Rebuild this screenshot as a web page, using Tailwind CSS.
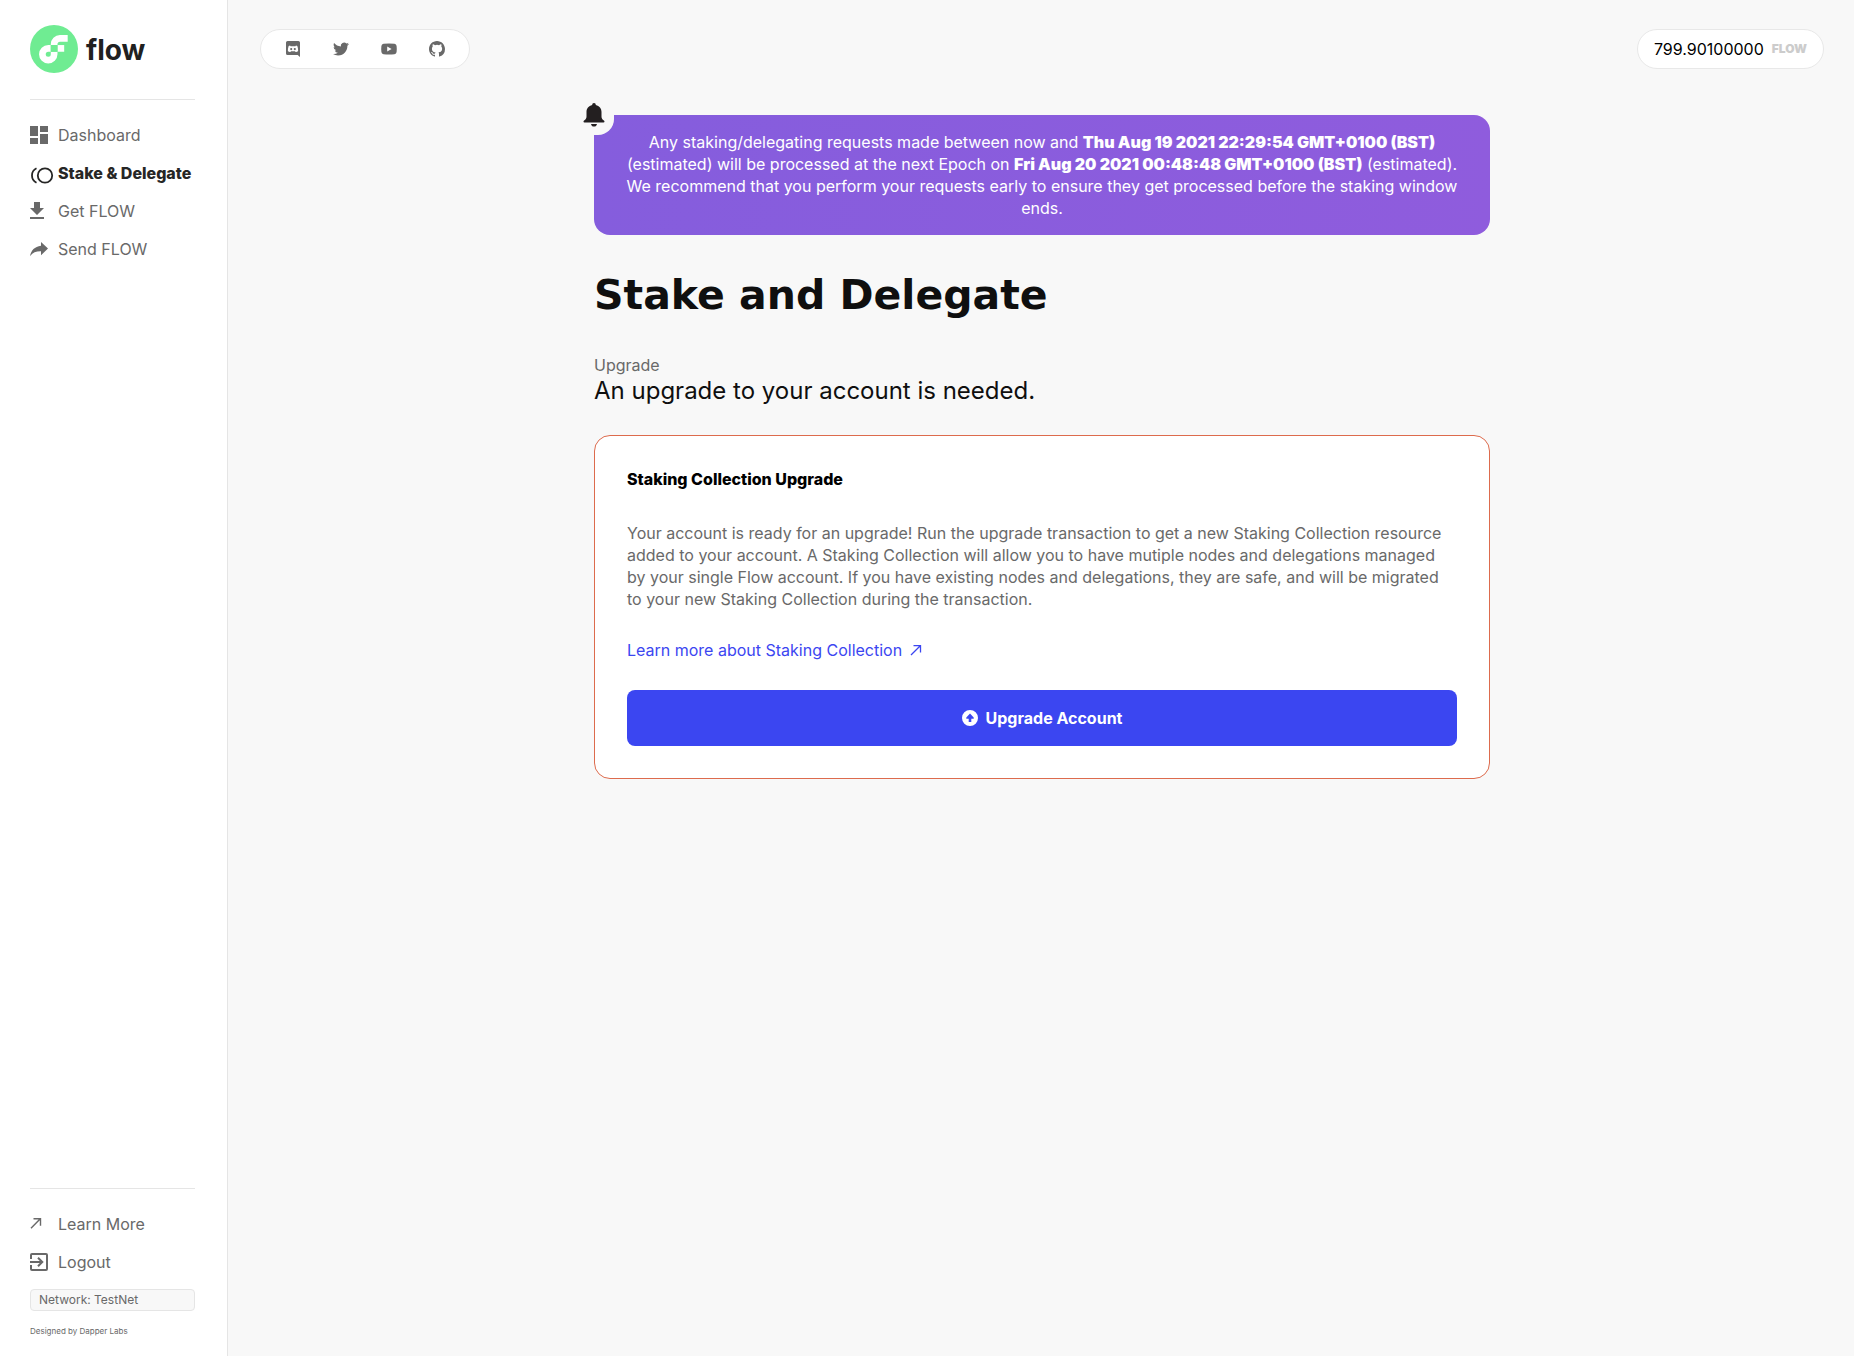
<!DOCTYPE html>
<html lang="en">
<head>
<meta charset="utf-8">
<meta name="viewport" content="width=device-width, initial-scale=1">
<title>Flow Port – Stake and Delegate</title>
<script src="https://cdn.jsdelivr.net/npm/@tailwindcss/browser@4"></script>
</head>
<body class="flex min-h-screen bg-[#f8f8f8] font-['Inter',sans-serif] text-base leading-[22px] text-[#696969]">

<aside class="flex w-[228px] shrink-0 flex-col border-r border-[#e5e5e5] bg-white pt-[25px] pr-8 pb-[17px] pl-[30px]">
  <a href="#" class="flex items-center gap-2 text-[#202020]">
    <svg class="size-12" viewBox="0 0 101 101" aria-hidden="true">
      <circle cx="50.5" cy="50.5" r="50.5" fill="#6fec92"/>
      <path fill="#fff" d="M57.82 42.18h14.12V56.3H57.82z"/>
      <path fill="#fff" d="M43.71 61.59a5.3 5.3 0 1 1-5.3-5.29h5.3V42.18h-5.3a19.41 19.41 0 1 0 19.41 19.41V56.3H43.71z"/>
      <path fill="#fff" d="M63.12 35.12H79.3V21H63.12a19.43 19.43 0 0 0-19.41 19.41v1.77h14.11v-1.77a5.3 5.3 0 0 1 5.3-5.29z"/>
      <path fill="#6fec92" d="M43.71 42.18h14.11V56.3H43.71z"/>
    </svg>
    <span class="pt-0.5 text-[28px] leading-8 font-bold">flow</span>
  </a>
  <hr class="mt-[26px] border-[#e5e5e5]">
  <nav class="mt-6 flex flex-col gap-4" aria-label="Main">
    <a href="#" class="flex items-center">
      <svg class="w-7 h-[18px] shrink-0" viewBox="0 0 28 18" fill="currentColor" aria-hidden="true"><path d="M0 0h8v10H0zM0 12h8v6H0zM10 0h8v6h-8zM10 8h8v10h-8z"/></svg>Dashboard
    </a>
    <a href="#" aria-current="page" class="flex items-center font-extrabold whitespace-nowrap text-[#262625]">
      <svg class="w-7 h-[22px] shrink-0" viewBox="0 0 28 22" fill="none" stroke="currentColor" stroke-width="1.8" aria-hidden="true"><circle cx="15" cy="13.500" r="7.2"/><path d="M6.500 6.300a8 8 0 0 0 0 14.400"/></svg>Stake &amp; Delegate
    </a>
    <a href="#" class="flex items-center">
      <svg class="w-7 h-[18px] shrink-0" viewBox="0 0 28 18" fill="currentColor" aria-hidden="true"><path d="M4 0h6v6h4l-7 7-7-7h4zM0 15h14v2H0z"/></svg>Get FLOW
    </a>
    <a href="#" class="flex items-center">
      <svg class="w-7 h-[18px] shrink-0" viewBox="0 0 28 18" fill="currentColor" aria-hidden="true"><path d="M11 2l7 6.6-7 6.6v-3.9C6 11.2 2.800 12.500 0 16.200 1 10.600 4.500 6.600 11 5.800z"/></svg>Send FLOW
    </a>
  </nav>

  <hr class="mt-auto border-[#e5e5e5]">
  <nav class="mt-6 flex flex-col gap-4" aria-label="Account">
    <a href="#" class="flex items-center">
      <svg class="w-7 h-[18px] shrink-0" viewBox="0 0 28 18" fill="none" stroke="currentColor" stroke-width="1.400" aria-hidden="true"><path d="M1 13.200 10.300 3.800M3.500 3.700h7v7"/></svg>Learn More
    </a>
    <a href="#" class="flex items-center">
      <svg class="w-7 h-[18px] shrink-0" viewBox="0 0 28 18" fill="none" stroke="currentColor" stroke-width="2" aria-hidden="true"><path d="M1 6V2q0-1 1-1h14q1 0 1 1v14q0 1-1 1H2q-1 0-1-1v-4M0 9h12M8 4.700 12.300 9 8 13.300"/></svg>Logout
    </a>
  </nav>
  <div class="mt-4 rounded border border-[#e5e5e5] bg-[#f8f8f8] px-2 text-xs leading-5">Network: TestNet</div>
  <p class="mt-3 text-[8px] leading-4">Designed by Dapper Labs</p>
</aside>

<main class="min-w-0 flex-1 pt-[29px] pr-[30px] pb-8 pl-8">
  <header class="flex items-center justify-between">
    <nav class="flex h-10 items-center gap-8 rounded-[20px] border border-[#e8e8e8] bg-white px-6" aria-label="Social">
      <a href="#" aria-label="Discord"><svg class="size-4" viewBox="0 0 16 16" fill="currentColor"><path fill-rule="evenodd" d="M2.600 0h10.800Q15 0 15 1.600V16l-2.300-2H2.600Q1 14 1 12.400V1.600Q1 0 2.600 0zM5 4.500C4 4.800 3.600 5.200 3.500 5.500 3 7 2.800 8.500 2.900 10c.7.800 1.600 1.100 2.500 1.100l.6-.8h4l.6.800c.9 0 1.800-.3 2.500-1.100.1-1.500-.1-3-.6-4.500-.1-.3-.5-.7-1.500-1l-.6.700H5.600zM6.200 7a1.100 1.100 0 1 1 0 2.200 1.100 1.100 0 0 1 0-2.200zm3.600 0a1.100 1.100 0 1 1 0 2.200 1.100 1.100 0 0 1 0-2.200z"/></svg></a>
      <a href="#" aria-label="Twitter"><svg class="size-4" viewBox="0 0 24 24" fill="currentColor"><path d="M23.950 4.570a10 10 0 0 1-2.820.770 4.960 4.960 0 0 0 2.160-2.720c-.950.550-2 .950-3.130 1.180a4.920 4.920 0 0 0-8.380 4.480C7.690 8.090 4.070 6.130 1.640 3.160a4.820 4.820 0 0 0-.670 2.480c0 1.710.870 3.210 2.190 4.100a4.900 4.900 0 0 1-2.230-.620v.060a4.920 4.920 0 0 0 3.950 4.830 5 5 0 0 1-2.210.080 4.940 4.940 0 0 0 4.600 3.420A9.870 9.870 0 0 1 0 19.540a13.990 13.990 0 0 0 7.550 2.210c9.050 0 14-7.500 14-13.980 0-.210 0-.420-.020-.630a9.940 9.940 0 0 0 2.460-2.550z"/></svg></a>
      <a href="#" aria-label="YouTube"><svg class="size-4" viewBox="0 0 16 16" fill="currentColor"><path fill-rule="evenodd" d="M2.500 2.800Q8 2.200 13.500 2.800 15.400 3 15.600 4.900q.4 3.100 0 6.200-.2 1.900-2.100 2.100-5.500.6-11 0Q.6 13 .4 11.100 0 8 .4 4.900.600 3 2.500 2.800zM6.200 5.500v5L10.600 8z"/></svg></a>
      <a href="#" aria-label="GitHub"><svg class="size-4" viewBox="0 0 16 16" fill="currentColor"><path d="M8 0C3.580 0 0 3.580 0 8c0 3.540 2.290 6.530 5.470 7.590.400.070.550-.170.550-.380 0-.190-.010-.820-.010-1.490-2.010.370-2.530-.490-2.690-.940-.090-.230-.480-.940-.820-1.130-.280-.150-.680-.520-.010-.530.630-.010 1.080.580 1.230.820.720 1.210 1.870.870 2.330.660.070-.520.280-.870.510-1.070-1.780-.200-3.640-.890-3.640-3.950 0-.870.310-1.590.820-2.150-.080-.200-.360-1.020.080-2.120 0 0 .670-.210 2.200.820a7.600 7.600 0 0 1 4 0c1.530-1.040 2.200-.820 2.200-.820.440 1.100.160 1.920.080 2.120.510.560.820 1.270.820 2.150 0 3.070-1.870 3.750-3.650 3.950.290.250.540.730.540 1.480 0 1.070-.010 1.930-.010 2.200 0 .210.150.460.550.380A8.010 8.010 0 0 0 16 8c0-4.420-3.580-8-8-8z"/></svg></a>
    </nav>
    <div class="flex h-10 items-center gap-2 rounded-[20px] border border-[#e8e8e8] bg-white px-4">
      <span class="text-black">799.90100000</span>
      <span class="text-xs font-black text-[#cccccc]">FLOW</span>
    </div>
  </header>

  <div class="mx-auto mt-[46px] max-w-4xl">
    <div class="relative rounded-2xl bg-linear-to-r from-[#855ddd] to-[#8f5cdd] px-8 py-4 text-center text-white">
      <span class="absolute -top-5 -left-5 flex size-10 items-center justify-center rounded-2xl bg-[#f8f8f8]">
        <svg class="size-6 text-[#231f20]" viewBox="0 0 24 24" fill="currentColor" aria-hidden="true"><path d="M12 0c1.200 0 1.800.8 1.800 2 3.600.8 5.700 3.500 5.700 7v4.500c0 2 .8 3 2.400 3.900.8.500.9 2-.4 2H2.500c-1.300 0-1.200-1.500-.4-2 1.600-.9 2.400-1.900 2.400-3.900V9c0-3.500 2.100-6.200 5.700-7 0-1.200.6-2 1.800-2zM9 21h6c-.3 1.600-1.400 2.600-3 2.600S9.300 22.600 9 21z"/></svg>
      </span>
      <p>Any staking/delegating requests made between now and <strong class="font-black">Thu Aug 19 2021 22:29:54 GMT+0100 (BST)</strong> (estimated) will be processed at the next Epoch on <strong class="font-black">Fri Aug 20 2021 00:48:48 GMT+0100 (BST)</strong> (estimated). We recommend that you perform your requests early to ensure they get processed before the staking window ends.</p>
    </div>

    <h1 class="mt-9 font-['DejaVu_Sans',sans-serif] text-[41px] leading-12 font-bold text-[#0f0f0f]">Stake and Delegate</h1>

    <p class="mt-[35px]">Upgrade</p>
    <h2 class="text-2xl leading-[30px] text-[#0f0f0f]">An upgrade to your account is needed.</h2>

    <section class="mt-[29px] rounded-2xl border border-[#dd6b4d] bg-white p-8">
      <h3 class="font-extrabold text-black">Staking Collection Upgrade</h3>
      <p class="mt-8">Your account is ready for an upgrade! Run the upgrade transaction to get a new Staking Collection resource added to your account. A Staking Collection will allow you to have mutiple nodes and delegations managed by your single Flow account. If you have existing nodes and delegations, they are safe, and will be migrated to your new Staking Collection during the transaction.</p>
      <a href="#" class="my-7 flex h-6 w-fit items-center gap-2 text-[#3b46f1]">Learn more about Staking Collection
        <svg class="size-3" viewBox="0 0 12 12" fill="none" stroke="currentColor" stroke-width="1.300" aria-hidden="true"><path d="M1 11 10.300 1.700M3.500 1.600h7v7"/></svg>
      </a>
      <button type="button" class="flex h-14 w-full items-center justify-center gap-2 rounded-lg bg-[#3b46f1] font-bold text-white">
        <svg class="size-4" viewBox="0 0 16 16" fill="currentColor" aria-hidden="true"><path fill-rule="evenodd" d="M8 0a8 8 0 1 1 0 16A8 8 0 0 1 8 0zm0 3.600L4.300 7.400v1.300h2.400V12h2.600V8.700h2.400V7.400z"/></svg>
        Upgrade Account
      </button>
    </section>
  </div>
</main>
</body>
</html>
